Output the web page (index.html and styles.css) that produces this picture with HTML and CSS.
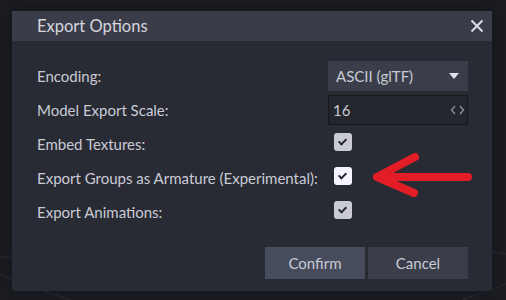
FILE: index.html
```html
<!DOCTYPE html>
<html lang="en">
<head>
  <meta charset="UTF-8">
  <title>Export Options</title>
  <link rel="stylesheet" href="styles.css">
</head>
<body>

  <!-- viewport grid behind the dialog -->
  <svg class="viewport-grid" width="506" height="300" viewBox="0 0 506 300">
    <line x1="0" y1="258" x2="40" y2="251" />
    <line x1="0" y1="275" x2="70" y2="300" />
    <line x1="486" y1="251" x2="506" y2="254" />
    <line x1="462" y1="300" x2="506" y2="284" />
  </svg>

  <section class="dialog">
    <div class="dialog-title">
      <h3>Export Options</h3>
      <button class="close-btn" title="Close">
        <svg width="14" height="14" viewBox="0 0 14 14">
          <path d="M1.5 1.5 L12.5 12.5 M12.5 1.5 L1.5 12.5" />
        </svg>
      </button>
    </div>

    <div class="dialog-content">
      <div class="form-row">
        <label>Encoding:</label>
        <div class="select">
          <span>ASCII (glTF)</span>
          <i class="caret"></i>
        </div>
      </div>
      <div class="form-row">
        <label>Model Export Scale:</label>
        <div class="number-input">
          <span>16</span>
          <svg class="slider-arrows" width="15" height="10" viewBox="0 0 15 10">
            <path d="M5 1 L1.5 5 L5 9 M10 1 L13.5 5 L10 9" />
          </svg>
        </div>
      </div>
      <div class="form-row">
        <label>Embed Textures:</label>
        <div class="control">
          <span class="checkbox checked"></span>
        </div>
      </div>
      <div class="form-row">
        <label>Export Groups as Armature (Experimental):</label>
        <div class="control">
          <span class="checkbox checked hovered"></span>
        </div>
      </div>
      <div class="form-row">
        <label>Export Animations:</label>
        <div class="control">
          <span class="checkbox checked"></span>
        </div>
      </div>
    </div>

    <div class="dialog-buttons">
      <button class="btn confirm">Confirm</button>
      <button class="btn">Cancel</button>
    </div>
  </section>

  <!-- annotation arrow -->
  <svg class="annotation" width="106" height="50" viewBox="0 0 106 50">
    <path d="M98 27 L7 27 M45 7 L7 27 L44 43" />
  </svg>

</body>
</html>
```

FILE: styles.css
```css
body {
  margin: 0;
  width: 506px;
  height: 300px;
  overflow: hidden;
  position: relative;
  background: #1b1c21;
  font-family: 'Lato', 'Noto Sans', sans-serif;
  color: #cacad4;
  padding: 11px 0 0 12px;
  box-sizing: border-box;
}

.viewport-grid {
  position: absolute;
  left: 0;
  top: 0;
}
.viewport-grid line {
  stroke: #2b2d34;
  stroke-width: 1;
}

.dialog {
  position: relative;
  width: 480px;
  height: 280px;
  background: #282b34;
  border-radius: 0 0 3px 3px;
  box-shadow: 0 0 10px rgba(0, 0, 0, 0.35);
  display: flex;
  flex-direction: column;
}

.dialog-title {
  height: 30px;
  background: #3a3d49;
  display: flex;
  align-items: center;
  justify-content: space-between;
  padding: 0 8px 0 25px;
}
.dialog-title h3 {
  margin: 0;
  font-size: 16.5px;
  font-weight: normal;
  color: #d6d6de;
}

.close-btn {
  background: none;
  border: none;
  padding: 0;
  width: 14px;
  height: 14px;
  cursor: pointer;
}
.close-btn path {
  stroke: #dcdce6;
  stroke-width: 2;
  fill: none;
}

.dialog-content {
  padding: 20px 24px 0 25px;
  display: flex;
  flex-direction: column;
  gap: 4px;
}

.form-row {
  display: flex;
  align-items: center;
  height: 30px;
}
.form-row label {
  flex: 1;
  font-size: 15px;
}

.select,
.number-input,
.control {
  width: 140px;
  height: 30px;
  box-sizing: border-box;
  display: flex;
  align-items: center;
  font-size: 15px;
}

.select {
  background: #3a3e4a;
  padding: 0 9px 0 8px;
  justify-content: space-between;
}
.caret {
  width: 0;
  height: 0;
  border-left: 5px solid transparent;
  border-right: 5px solid transparent;
  border-top: 6px solid #e2e2ea;
}

.number-input {
  background: #23262d;
  border: 1px solid #17191d;
  padding: 0 2px 0 4px;
  justify-content: space-between;
}
.slider-arrows path {
  stroke: #8b8f9a;
  stroke-width: 1.4;
  fill: none;
}

.control {
  align-items: flex-start;
  padding: 4px 0 0 6px;
}

.checkbox {
  width: 18px;
  height: 18px;
  border-radius: 3px;
  background: #c9cad3;
  position: relative;
}
.checkbox.hovered {
  background: #f4f3ff;
}
.checkbox.checked::after {
  content: "";
  position: absolute;
  left: 6px;
  top: 4px;
  width: 3px;
  height: 6px;
  border: solid #23262d;
  border-width: 0 2px 2px 0;
  transform: rotate(45deg);
}

.dialog-buttons {
  margin-top: 20px;
  padding-right: 24px;
  display: flex;
  justify-content: flex-end;
  gap: 3px;
}

.btn {
  width: 100px;
  height: 32px;
  border: none;
  background: #3a3e4a;
  color: #cacad4;
  font-family: 'Lato', 'Noto Sans', sans-serif;
  font-size: 15px;
  cursor: pointer;
}
.btn.confirm {
  background: #474c5c;
}

.annotation {
  position: absolute;
  left: 370px;
  top: 150px;
}
.annotation path {
  stroke: #e31d25;
  stroke-width: 8;
  stroke-linecap: round;
  stroke-linejoin: round;
  fill: none;
}
```
